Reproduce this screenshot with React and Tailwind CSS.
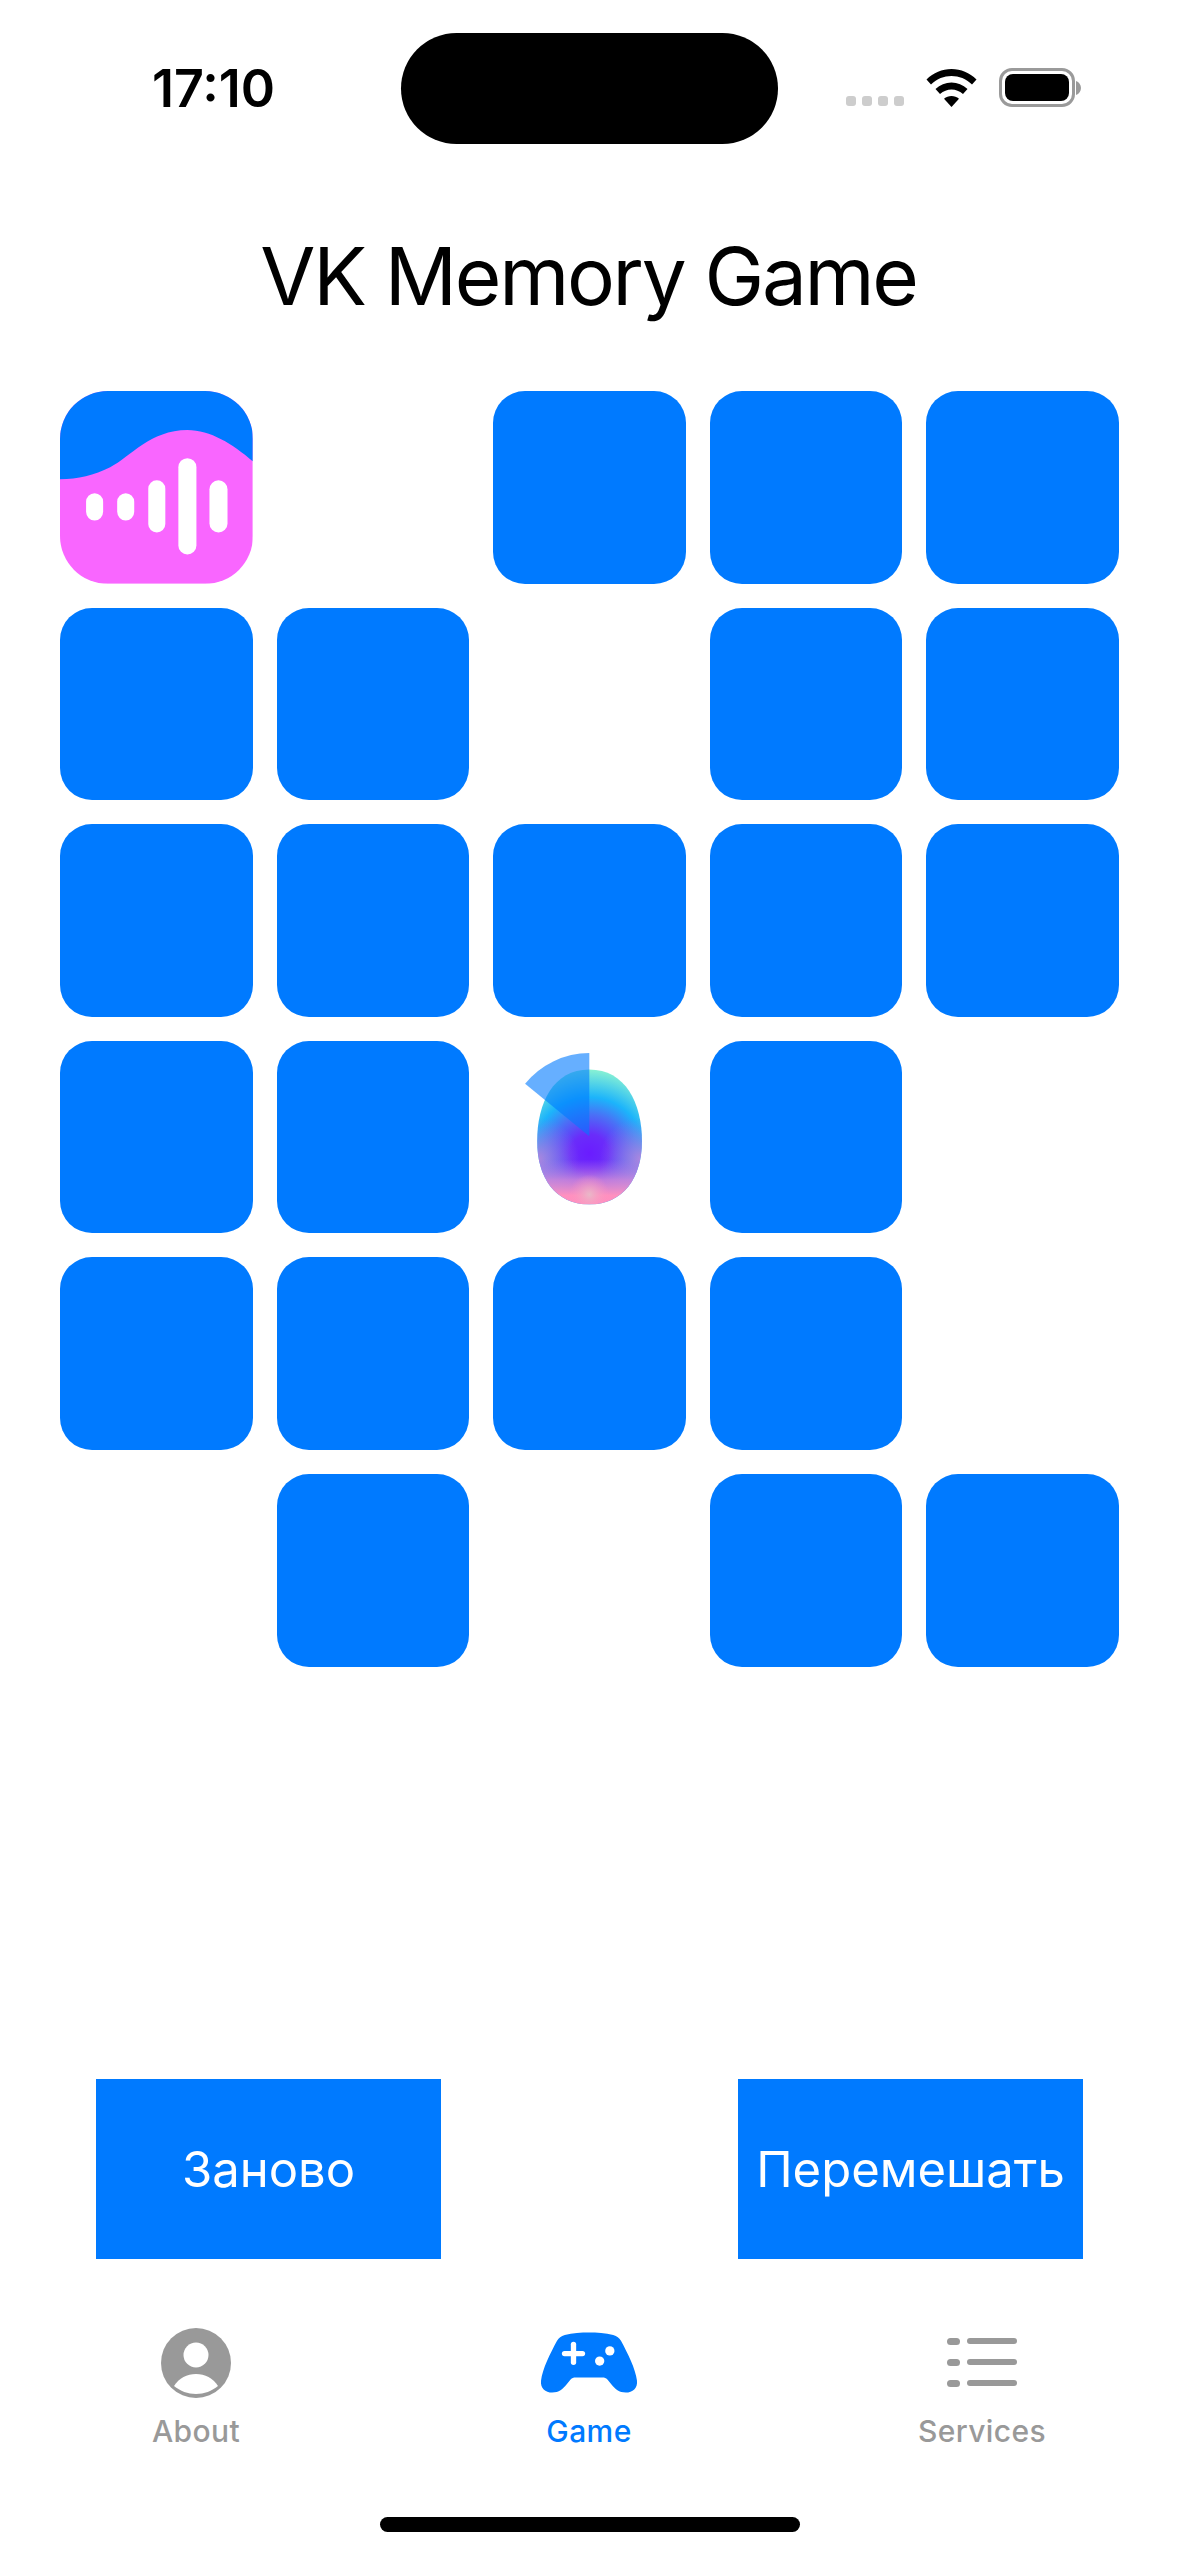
const cardRows = [
  ['wave', null, 'back', 'back', 'back'],
  ['back', 'back', null, 'back', 'back'],
  ['back', 'back', 'back', 'back', 'back'],
  ['back', 'back', 'orb', 'back', null],
  ['back', 'back', 'back', 'back', null],
  [null, 'back', null, 'back', 'back'],
];

function WaveIcon() {
  return (
    <svg viewBox="0 0 192 192" className="block h-full w-full">
      <rect width="192" height="192" fill="#f966ff" />
      <path d="M0 0H192V70C172 53 150 39 127 39C90 39 70 66 50 76C34 84 18 88 0 88Z" fill="#007aff" />
      <g fill="#fff">
        <rect x="26" y="102" width="17" height="27" rx="8.500" />
        <rect x="57" y="102" width="17" height="27" rx="8.500" />
        <rect x="88" y="89" width="17" height="52" rx="8.500" />
        <rect x="118" y="67" width="18" height="96" rx="9" />
        <rect x="149" y="89" width="18" height="52" rx="9" />
      </g>
    </svg>
  );
}

function OrbIcon() {
  return (
    <svg viewBox="0 0 192 192" className="block h-full w-full">
      <defs>
        <radialGradient id="orb" gradientUnits="userSpaceOnUse" cx="96" cy="112" r="86">
          <stop offset="0" stopColor="#6a1cff" />
          <stop offset="0.22" stopColor="#6a2cfa" />
          <stop offset="0.45" stopColor="#4a70f6" />
          <stop offset="0.65" stopColor="#1cb4fb" />
          <stop offset="1" stopColor="#92f7d0" />
        </radialGradient>
        <linearGradient id="orbLow" gradientUnits="userSpaceOnUse" x1="0" y1="118" x2="0" y2="163">
          <stop offset="0" stopColor="#b070e8" stopOpacity="0" />
          <stop offset="0.45" stopColor="#d884d8" stopOpacity="0.8" />
          <stop offset="0.8" stopColor="#ff90bf" />
          <stop offset="1" stopColor="#ff8fc0" />
        </linearGradient>
        <radialGradient id="orbGlow" gradientUnits="userSpaceOnUse" cx="96" cy="153" r="20">
          <stop offset="0" stopColor="#e9b8c8" />
          <stop offset="1" stopColor="#ff90bf" stopOpacity="0" />
        </radialGradient>
        <radialGradient id="orbLeft" gradientUnits="userSpaceOnUse" cx="44" cy="118" r="42">
          <stop offset="0" stopColor="#b884dc" stopOpacity="0.95" />
          <stop offset="1" stopColor="#9070e8" stopOpacity="0" />
        </radialGradient>
        <radialGradient id="orbRight" gradientUnits="userSpaceOnUse" cx="148" cy="118" r="42">
          <stop offset="0" stopColor="#b884dc" stopOpacity="0.95" />
          <stop offset="1" stopColor="#9070e8" stopOpacity="0" />
        </radialGradient>
        <clipPath id="orbClip">
          <path d="M96 28.500C132 28.500 148.500 62 148.500 100C148.500 136 130 163 96 163C62 163 44 136 44 100C44 62 60 28.500 96 28.500Z" />
        </clipPath>
      </defs>
      <g clipPath="url(#orbClip)">
        <rect width="192" height="192" fill="url(#orb)" />
        <rect width="192" height="192" fill="url(#orbLeft)" />
        <rect width="192" height="192" fill="url(#orbRight)" />
        <rect y="118" width="192" height="74" fill="url(#orbLow)" />
        <rect width="192" height="192" fill="url(#orbGlow)" />
      </g>
      <path d="M96 95V12A83 83 0 0 0 32 42.500Z" fill="#007aff" fillOpacity="0.6" />
    </svg>
  );
}

function Card({ kind }) {
  if (!kind) return <div className="h-[192.6px]" />;
  if (kind === 'orb') return <div className="h-[192.6px]"><OrbIcon /></div>;
  if (kind === 'wave') {
    return (
      <div className="h-[192.6px] overflow-hidden rounded-[48px]">
        <WaveIcon />
      </div>
    );
  }
  return <div className="h-[192.6px] rounded-[32px] bg-[#007aff]" />;
}

function StatusBar() {
  return (
    <div className="relative flex h-[144px] items-start justify-between">
      <span className="ml-[152px] mt-[57px] text-[52px] font-semibold leading-[64px] text-black">17:10</span>
      <div className="absolute left-[401px] top-[33px] h-[111px] w-[377px] rounded-[56px] bg-black" />
      <div className="mr-[98px] mt-[68px] flex items-start">
        <div className="mr-[22px] mt-[28px] flex gap-[6px]">
          <span className="h-[10px] w-[10px] rounded-[3px] bg-[#cdcdcd]" />
          <span className="h-[10px] w-[10px] rounded-[3px] bg-[#cdcdcd]" />
          <span className="h-[10px] w-[10px] rounded-[3px] bg-[#cdcdcd]" />
          <span className="h-[10px] w-[10px] rounded-[3px] bg-[#cdcdcd]" />
        </div>
        <svg width="51" height="38" viewBox="0 0 50 38" className="mr-[22px] mt-[1px]">
          <path d="M25 0C34.500 0 43 3.800 50 10.500L45.500 15.500C39.500 9.800 32.500 7 25 7C17.500 7 10.500 9.800 4.500 15.500L0 10.500C7 3.800 15.500 0 25 0Z" />
          <path d="M25 13.500C31 13.500 36.500 15.800 41 20L36.500 25C33 22 29.200 20.500 25 20.500C20.800 20.500 17 22 13.500 25L9 20C13.500 15.800 19 13.500 25 13.500Z" />
          <path d="M25 27C27.800 27 30.300 28 32.500 29.800L25 38L17.500 29.800C19.700 28 22.200 27 25 27Z" />
        </svg>
        <div className="flex items-center">
          <div className="h-[39px] w-[76px] rounded-[13px] border-[3px] border-[#9a9a9a] p-[3px]">
            <div className="h-full w-full rounded-[8px] bg-black" />
          </div>
          <svg width="5" height="14" viewBox="0 0 5 14" className="ml-[1px]">
            <path d="M0 0C3 1 5 4 5 7C5 10 3 13 0 14Z" fill="#9a9a9a" />
          </svg>
        </div>
      </div>
    </div>
  );
}

function TabItem({ icon, label, active }) {
  return (
    <div className="flex w-[180px] flex-col items-center">
      <div className="flex h-[76px] items-center justify-center">{icon}</div>
      <span className={`mt-[12px] text-[30px] font-medium leading-[36px] tracking-[0.4px] ${active ? 'text-[#007aff]' : 'text-[#999999]'}`}>{label}</span>
    </div>
  );
}

export default function App() {
  return (
    <div className="flex h-[2556px] w-[1179px] flex-col overflow-hidden bg-white font-['Inter',sans-serif]">
      <StatusBar />

      <h1 className="mt-[82px] pr-[2px] text-center text-[80px] font-normal leading-[100px] tracking-[-2.3px] text-black">VK Memory Game</h1>

      {/* Card grid */}
      <div className="ml-[60px] mt-[65px] grid w-fit grid-cols-[repeat(5,192.6px)] gap-[24px]">
        {cardRows.flat().map((kind, i) => <Card key={i} kind={kind} />)}
      </div>

      {/* Buttons */}
      <div className="mx-[96px] mt-[412.4px] flex justify-between">
        <button className="flex h-[180px] w-[345px] items-center justify-center bg-[#007aff] pt-[2px] text-[49px] leading-none text-white">Заново</button>
        <button className="flex h-[180px] w-[345px] items-center justify-center bg-[#007aff] pt-[2px] text-[49px] leading-none text-white">Перемешать</button>
      </div>

      {/* Tab bar */}
      <div className="mt-[66px] flex justify-between pl-[106px] pr-[107px]">
        <TabItem
          label="About"
          icon={
            <svg width="70" height="70" viewBox="0 0 70 70">
              <circle cx="35" cy="35" r="35" fill="#999999" />
              <circle cx="35" cy="27" r="12.500" fill="#fff" />
              <path d="M13 58C18 50 26 46 35 46C44 46 52 50 57 58C51 63 43 66 35 66C27 66 19 63 13 58Z" fill="#fff" />
            </svg>
          }
        />
        <TabItem
          active
          label="Game"
          icon={
            <svg width="98" height="62" viewBox="0 0 100 64">
              <path fill="#007aff" d="M17 9C19 6 21 4 25 3C33 1 42 0.500 50 0.500C58 0.500 67 1 75 3C79 4 81 6 83 9C90 22 98 38 99.500 50C100.500 58 95 62.500 88 62.500C81 62.500 77 59 73 54L69 49C67.500 47.500 66 47 64 47H36C34 47 32.500 47.500 31 49L27 54C23 59 19 62.500 12 62.500C5 62.500 -0.500 58 0.500 50C2 38 10 22 17 9Z" />
              <rect x="22" y="19.500" width="24" height="5.500" rx="2.750" fill="#fff" />
              <rect x="31.250" y="10" width="5.500" height="24" rx="2.750" fill="#fff" />
              <circle cx="61" cy="30" r="4.800" fill="#fff" />
              <circle cx="71.500" cy="19.500" r="4.800" fill="#fff" />
            </svg>
          }
        />
        <TabItem
          label="Services"
          icon={
            <svg width="70" height="50" viewBox="0 0 70 50" fill="#999999">
              <rect x="0" y="0" width="13" height="7" rx="3.500" />
              <rect x="20" y="0" width="50" height="6" rx="3" />
              <rect x="0" y="21" width="13" height="7" rx="3.500" />
              <rect x="20" y="21" width="50" height="6" rx="3" />
              <rect x="0" y="42" width="13" height="7" rx="3.500" />
              <rect x="20" y="42" width="50" height="6" rx="3" />
            </svg>
          }
        />
      </div>

      {/* Home indicator */}
      <div className="mx-auto mt-[68px] h-[15px] w-[420px] rounded-full bg-black" />
    </div>
  );
}
